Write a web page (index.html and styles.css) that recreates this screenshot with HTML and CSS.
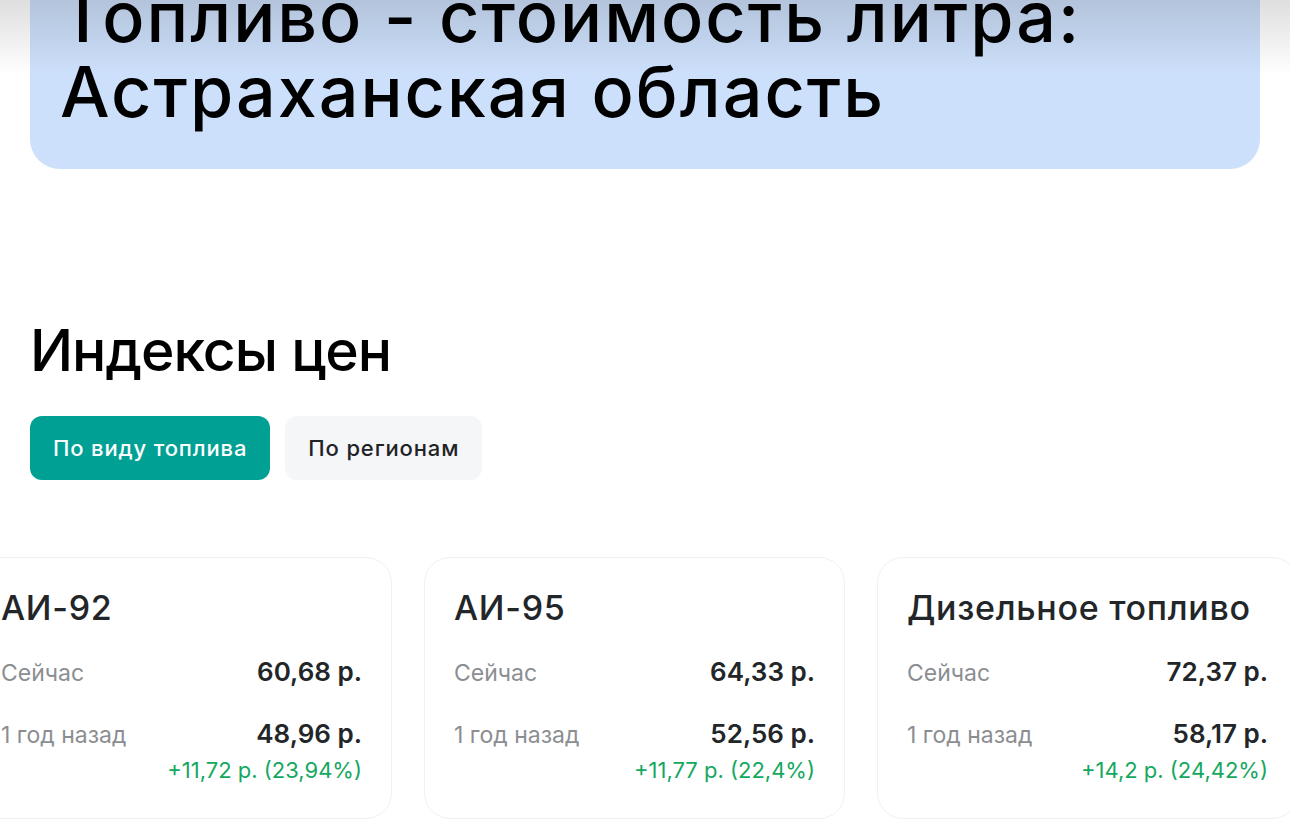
FILE: index.html
```html
<!DOCTYPE html>
<html lang="ru">
<head>
<meta charset="utf-8">
<title>Топливо - стоимость литра: Астраханская область</title>
<link rel="stylesheet" href="styles.css">
</head>
<body>
<div class="top-shade"></div>
<main class="page">
  <header class="banner">
    <h1 class="banner-title">Топливо - стоимость литра:<br>Астраханская область</h1>
  </header>

  <section class="indexes">
    <h2 class="section-title">Индексы цен</h2>
    <div class="tabs">
      <button class="tab tab-active">По виду топлива</button>
      <button class="tab">По регионам</button>
    </div>
    <div class="cards">
      <article class="card">
        <h3 class="card-title">АИ-92</h3>
        <div class="row"><span class="label">Сейчас</span><span class="value">60,68 р.</span></div>
        <div class="row row-year"><span class="label">1 год назад</span><span class="value">48,96 р.</span></div>
        <div class="change">+11,72 р. (23,94%)</div>
      </article>
      <article class="card">
        <h3 class="card-title">АИ-95</h3>
        <div class="row"><span class="label">Сейчас</span><span class="value">64,33 р.</span></div>
        <div class="row row-year"><span class="label">1 год назад</span><span class="value">52,56 р.</span></div>
        <div class="change">+11,77 р. (22,4%)</div>
      </article>
      <article class="card">
        <h3 class="card-title">Дизельное топливо</h3>
        <div class="row"><span class="label">Сейчас</span><span class="value">72,37 р.</span></div>
        <div class="row row-year"><span class="label">1 год назад</span><span class="value">58,17 р.</span></div>
        <div class="change">+14,2 р. (24,42%)</div>
      </article>
    </div>
  </section>
</main>
</body>
</html>
```

FILE: styles.css
```css
* { box-sizing: border-box; }
html, body { margin: 0; padding: 0; background: #fff; }
body {
  width: 1290px;
  height: 824px;
  overflow: hidden;
  position: relative;
  font-family: "Inter", "Liberation Sans", Arial, sans-serif;
  color: #000;
}
.top-shade {
  position: absolute;
  left: 0; top: 0; right: 0;
  height: 75px;
  background: linear-gradient(to bottom, rgba(0,0,0,0.13), rgba(0,0,0,0));
  pointer-events: none;
  z-index: 5;
}
.page { padding: 0 30px; }
.banner {
  margin-top: -53px;
  background: #cde0fb;
  border-radius: 0 0 30px 30px;
  padding: 32px 30px 40px;
}
.banner-title {
  margin: 0;
  font-size: 70px;
  line-height: 75px;
  letter-spacing: 2px;
  font-weight: 500;
  color: #000;
}
.indexes { padding-top: 149px; }
.section-title {
  margin: 0;
  font-size: 57px;
  line-height: 66px;
  letter-spacing: -1px;
  font-weight: 500;
  color: #000;
}
.tabs {
  display: flex;
  gap: 15px;
  margin-top: 32px;
}
.tab {
  height: 64px;
  border: 0;
  border-radius: 12px;
  padding: 0 23px;
  font-family: "Inter", "Noto Sans", sans-serif;
  font-size: 22px;
  letter-spacing: 0.85px;
  font-weight: 500;
  background: #f5f6f8;
  color: #1f2326;
}
.tab-active { background: #00a194; color: #fff; }
.cards {
  display: flex;
  gap: 32px;
  margin: 77px 0 0 -59px;
}
.card {
  flex: 0 0 421px;
  height: 262px;
  border: 1px solid #f0f1f3;
  border-radius: 26px;
  padding: 28px 29px 0 29px;
}
.card-title {
  margin: 0 0 22px;
  font-size: 34px;
  line-height: 44px;
  letter-spacing: 0.7px;
  font-weight: 500;
  color: #222629;
}
.row {
  display: flex;
  justify-content: space-between;
  align-items: baseline;
  height: 40px;
  line-height: 40px;
}
.row-year { margin-top: 22px; }
.label { font-size: 23px; color: #8b8e91; font-weight: 400; }
.value { font-size: 26px; color: #222629; font-weight: 600; }
.change {
  text-align: right;
  font-size: 22px;
  line-height: 32px;
  color: #14a85f;
  font-weight: 400;
}
```
